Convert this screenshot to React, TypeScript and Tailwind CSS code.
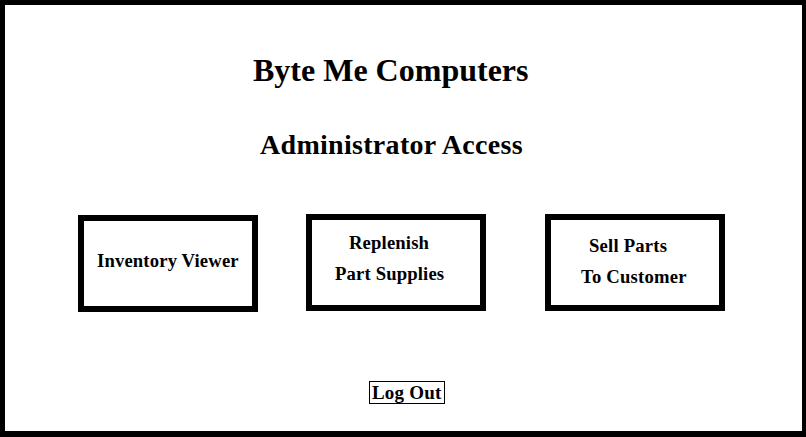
import React from "react";

export default function App() {
  return (
    <div className="w-[806px] h-[437px] bg-white border-black border-t-[5px] border-l-[5px] border-r-[4px] border-b-[6px] font-['Liberation_Serif',serif] font-bold text-black flex flex-col">
      <div className="pt-[49px] pl-[248px] text-[32px] leading-[32px] whitespace-nowrap">Byte Me Computers</div>
      <div className="mt-[45px] pl-[255px] text-[28px] leading-[28px] tracking-[0.3px] whitespace-nowrap">Administrator Access</div>
      <div className="mt-[55px] pl-[73px] flex items-start">
        <div className="mt-[1px] w-[180px] h-[97px] border-[6px] border-black text-[18.67px] leading-[18.67px] tracking-[0.15px] whitespace-nowrap">
          <div className="pt-[31px] pl-[13px]">Inventory Viewer</div>
        </div>
        <div className="ml-[48px] w-[180px] h-[97px] border-[6px] border-black text-[18.67px] leading-[31px] tracking-[0.15px] whitespace-nowrap pt-[7px]">
          <div className="pl-[37px]">Replenish</div>
          <div className="pl-[23px]">Part Supplies</div>
        </div>
        <div className="ml-[59px] w-[180px] h-[97px] border-[6px] border-black text-[18.67px] leading-[31px] tracking-[0.2px] whitespace-nowrap pt-[10px]">
          <div className="pl-[38px]">Sell Parts</div>
          <div className="pl-[30px]">To Customer</div>
        </div>
      </div>
      <div className="mt-[69px] pl-[364px] flex">
        <button className="border border-black px-[2px] text-[19px] leading-[21px] tracking-[0.2px] font-bold whitespace-nowrap bg-white">Log Out</button>
      </div>
    </div>
  );
}
